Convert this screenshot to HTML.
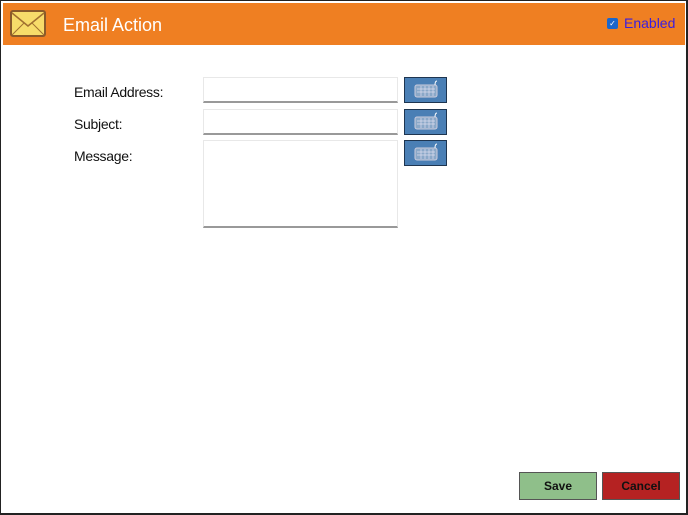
<!DOCTYPE html>
<html><head><style>
*{margin:0;padding:0;box-sizing:border-box}
body{width:688px;height:515px;background:#fff;position:relative;overflow:hidden;font-family:"Liberation Sans",sans-serif}
.frame{position:absolute;left:0;top:0;width:688px;height:515px;border:1px solid #222;border-right:2px solid #222;border-bottom:2px solid #222}
.hdr{position:absolute;left:3px;top:3px;width:682px;height:42px;background:#ef7f22}
.title{position:absolute;left:63px;top:15px;color:#fff;font-size:18px}
.en{position:absolute;left:624px;top:15px;color:#3a1ee0;font-size:14px}
.cb{position:absolute;left:607px;top:18px;width:11px;height:11px;background:#1a66cc;border-radius:2px;color:#fff;font-size:8px;line-height:11px;text-align:center}
.lbl{position:absolute;left:74px;font-size:14px;color:#111;letter-spacing:-0.3px}
.in{position:absolute;left:203px;width:195px;border:1px solid #e8e8e8;border-bottom:2px solid #999;background:#fff}
.kb{position:absolute;left:404px;width:43px;height:26px;background:#4a7fb5;border:1px solid #1e3550}
.btn{position:absolute;top:472px;height:28px;width:78px;border:1px solid #555;font-weight:bold;font-size:12px;text-align:center;line-height:26px;color:#111}
</style></head><body>
<div class="frame"></div>
<div class="hdr"></div>
<svg style="position:absolute;left:10px;top:10px" width="36" height="27" viewBox="0 0 36 27">
<rect x="1" y="1" width="34" height="25" rx="2" fill="#f7dc6a" stroke="#8a5a2a" stroke-width="2"/>
<path d="M2 3 L18 16 L34 3" fill="none" stroke="#a07030" stroke-width="1.5"/>
<path d="M2 25 L14 13 M34 25 L22 13" stroke="#a07030" stroke-width="1"/>
</svg>
<div class="title">Email Action</div>
<div class="cb">✓</div>
<div class="en">Enabled</div>
<div class="lbl" style="top:84px">Email Address:</div>
<div class="lbl" style="top:116px">Subject:</div>
<div class="lbl" style="top:148px">Message:</div>
<div class="in" style="top:77px;height:26px"></div>
<div class="in" style="top:109px;height:26px"></div>
<div class="in" style="top:140px;height:88px"></div>
<div class="kb" style="top:77px"><svg width="41" height="24"><rect x="10" y="7" width="22" height="12" rx="2" fill="#8aa8c8" stroke="#ccd" /><path d="M12 11h18M12 14h18M16 8v10M20 8v10M24 8v10M28 8v10" stroke="#dde" stroke-width=".7"/><path d="M30 7 Q30 3 32 3" stroke="#fff" fill="none"/></svg></div>
<div class="kb" style="top:109px"><svg width="41" height="24"><rect x="10" y="7" width="22" height="12" rx="2" fill="#8aa8c8" stroke="#ccd" /><path d="M12 11h18M12 14h18M16 8v10M20 8v10M24 8v10M28 8v10" stroke="#dde" stroke-width=".7"/><path d="M30 7 Q30 3 32 3" stroke="#fff" fill="none"/></svg></div>
<div class="kb" style="top:140px"><svg width="41" height="24"><rect x="10" y="7" width="22" height="12" rx="2" fill="#8aa8c8" stroke="#ccd" /><path d="M12 11h18M12 14h18M16 8v10M20 8v10M24 8v10M28 8v10" stroke="#dde" stroke-width=".7"/><path d="M30 7 Q30 3 32 3" stroke="#fff" fill="none"/></svg></div>
<div class="btn" style="left:519px;background:#8fbf8a">Save</div>
<div class="btn" style="left:602px;background:#b52222">Cancel</div>
</body></html>
